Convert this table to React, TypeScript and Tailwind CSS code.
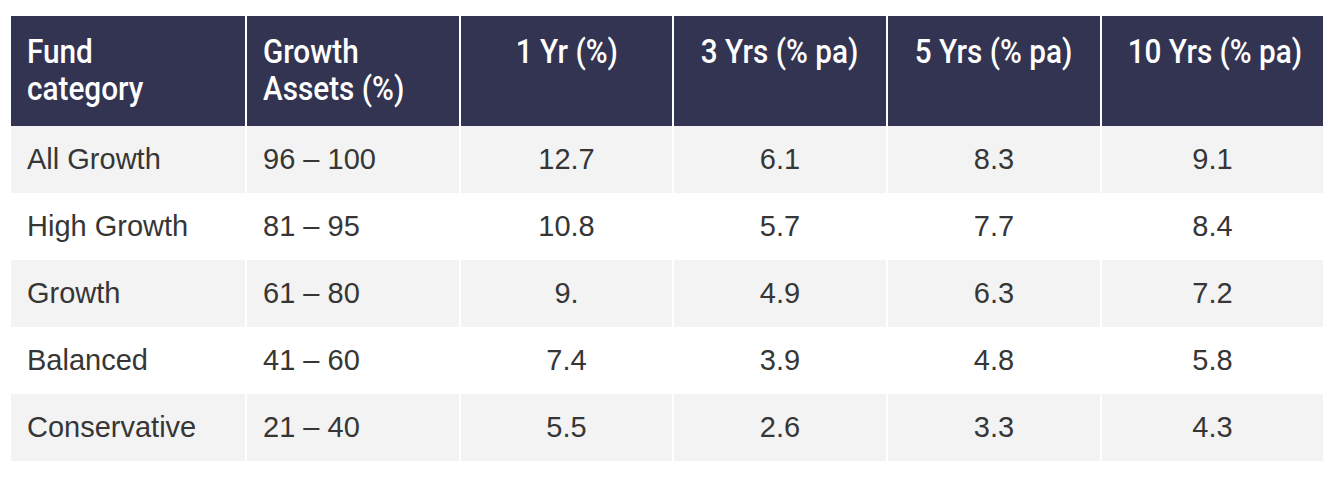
import React from "react";

const headers = [
  { label: "Fund category", lines: ["Fund", "category"], align: "left" },
  { label: "Growth Assets (%)", lines: ["Growth", "Assets (%)"], align: "left" },
  { label: "1 Yr (%)", lines: ["1 Yr (%)"], align: "center" },
  { label: "3 Yrs (% pa)", lines: ["3 Yrs (% pa)"], align: "center" },
  { label: "5 Yrs (% pa)", lines: ["5 Yrs (% pa)"], align: "center" },
  { label: "10 Yrs (% pa)", lines: ["10 Yrs (% pa)"], align: "center" },
];

const rows = [
  ["All Growth", "96 – 100", "12.7", "6.1", "8.3", "9.1"],
  ["High Growth", "81 – 95", "10.8", "5.7", "7.7", "8.4"],
  ["Growth", "61 – 80", "9.", "4.9", "6.3", "7.2"],
  ["Balanced", "41 – 60", "7.4", "3.9", "4.8", "5.8"],
  ["Conservative", "21 – 40", "5.5", "2.6", "3.3", "4.3"],
];

export default function App() {
  return (
    <div className="w-[1338px] h-[478px] bg-white pt-[16px] pl-[11px]">
      <div className="grid grid-cols-[234px_212px_211px_212px_212px_221px] gap-x-[2px] w-fit">
        {headers.map((h) => (
          <div
            key={h.label}
            className={`h-[110px] bg-[#333452] text-white font-medium text-[33px] leading-[37px] pt-[17px] px-[16px] font-['Roboto',sans-serif] whitespace-nowrap ${
              h.align === "center" ? "text-center" : "text-left"
            }`}
          >
            {h.lines.map((l) => (
              <div key={l}>
                <span
                  className={`inline-block scale-x-[0.9] ${
                    h.align === "center" ? "origin-center" : "origin-left"
                  }`}
                >
                  {l}
                </span>
              </div>
            ))}
          </div>
        ))}
        {rows.map((r, i) =>
          r.map((cell, j) => (
            <div
              key={`${i}-${j}`}
              className={`h-[67px] flex items-center px-[16px] text-[29px] text-[#363636] font-['Liberation_Sans',sans-serif] ${
                i % 2 === 0 ? "bg-[#f3f3f3]" : "bg-white"
              } ${j < 2 ? "justify-start" : "justify-center"}`}
            >
              {cell}
            </div>
          ))
        )}
      </div>
    </div>
  );
}
